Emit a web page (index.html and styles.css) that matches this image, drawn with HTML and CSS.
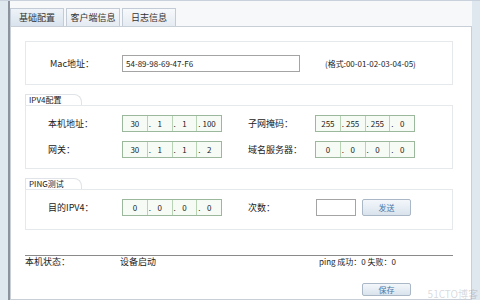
FILE: index.html
```html
<!DOCTYPE html>
<html lang="zh-CN">
<head>
    <meta charset="UTF-8">
    <title>网络配置</title>
    <link rel="stylesheet" href="styles.css">
</head>
<body>
    <div class="frame">
        <!-- 选项卡 -->
        <div class="tabs">
            <div class="tab active">基础配置</div>
            <div class="tab">客户端信息</div>
            <div class="tab">日志信息</div>
        </div>

        <div class="panel">
            <!-- MAC -->
            <div class="group mac">
                <span class="label">Mac地址：</span>
                <div class="text-input wide">54-89-98-69-47-F6</div>
                <span class="hint">(格式:00-01-02-03-04-05)</span>
            </div>

            <!-- IPV4 -->
            <div class="legend">IPV4配置</div>
            <div class="group boxed">
                <div class="row">
                    <span class="label">本机地址：</span>
                    <div class="ip"><span>30</span><span>1</span><span>1</span><span>100</span></div>
                    <span class="label right">子网掩码：</span>
                    <div class="ip"><span>255</span><span>255</span><span>255</span><span>0</span></div>
                </div>
                <div class="row">
                    <span class="label">网关：</span>
                    <div class="ip"><span>30</span><span>1</span><span>1</span><span>2</span></div>
                    <span class="label right">域名服务器：</span>
                    <div class="ip"><span>0</span><span>0</span><span>0</span><span>0</span></div>
                </div>
            </div>

            <!-- PING -->
            <div class="legend">PING测试</div>
            <div class="group boxed ping">
                <div class="row">
                    <span class="label">目的IPV4：</span>
                    <div class="ip"><span>0</span><span>0</span><span>0</span><span>0</span></div>
                    <span class="label right">次数：</span>
                    <div class="text-input small"></div>
                    <button class="btn">发送</button>
                </div>
            </div>

            <!-- 状态 -->
            <div class="status">
                <span class="status-name">本机状态：</span>
                <span class="status-value">设备启动</span>
                <span class="status-ping">ping 成功：0 失败：0</span>
            </div>

            <div class="footer">
                <button class="btn">保存</button>
            </div>
        </div>
    </div>
    <div class="watermark">51CTO博客</div>
</body>
</html>
```

FILE: styles.css
```css
body {
    margin: 0;
    width: 480px;
    height: 300px;
    overflow: hidden;
    background: #dfe7ef;
    border-top: 1px solid #c9d2dc;
    box-sizing: border-box;
    font-family: "Noto Sans CJK SC", "DejaVu Sans", sans-serif;
    font-size: 9px;
    color: #222;
    position: relative;
}
.frame {
    margin-left: 8px;
    width: 464px;
    height: 299px;
    background: #f6f8fa;
    border-left: 2px solid #8c939c;
    box-sizing: border-box;
    padding-top: 7px;
}
.tabs {
    display: flex;
    gap: 2px;
}
.tab {
    width: 52px;
    height: 17px;
    line-height: 17px;
    text-align: center;
    border: 1px solid #c3ccd6;
    border-bottom: none;
    background: linear-gradient(#f7f9fb, #e4ebf2);
    color: #333;
}
.tab.active {
    background: linear-gradient(#eef3f8, #d9e3ed);
}
.panel {
    background: #fff;
    border: 1px solid #c8cfd7;
    height: 274px;
    box-sizing: border-box;
    padding: 14px 0 0 14px;
}
.group {
    width: 428px;
    box-sizing: border-box;
    border: 1px solid #e6e9ec;
}
.mac {
    height: 44px;
    display: flex;
    align-items: center;
    padding-left: 24px;
}
.mac .label {
    width: 72px;
}
.hint {
    margin-left: 25px;
    font-size: 8px;
}
.legend {
    margin-top: 9px;
    width: 52px;
    height: 10px;
    line-height: 10px;
    padding-left: 3px;
    border: 1px solid #e0e3e7;
    border-bottom: none;
    border-top-right-radius: 8px;
    font-size: 8px;
    color: #222;
}
.boxed {
    padding: 9px 0 10px 22px;
    display: flex;
    flex-direction: column;
    gap: 9px;
}
.ping {
    padding-bottom: 13px;
}
.row {
    display: flex;
    align-items: center;
}
.label {
    width: 74px;
    flex: none;
}
.label.right {
    width: 67px;
    margin-left: 26px;
}
.text-input {
    height: 17px;
    box-sizing: border-box;
    border: 1px solid #a4a4a4;
    line-height: 15px;
    padding-left: 3px;
    background: #fff;
    font-size: 8px;
}
.wide {
    width: 178px;
}
.small {
    width: 40px;
    margin-left: 1px;
}
.ip {
    display: flex;
    width: 100px;
    height: 17px;
    box-sizing: border-box;
    border: 1px solid #9cb89c;
    background: #f7fbf5;
}
.ip span {
    flex: 1;
    text-align: center;
    line-height: 15px;
    font-size: 8px;
    border-left: 1px solid #b9d4b5;
    position: relative;
}
.ip span:first-child {
    border-left: none;
}
.ip span + span::before {
    content: ".";
    position: absolute;
    left: 1px;
    top: 0;
}
.btn {
    margin-left: 6px;
    width: 49px;
    height: 17px;
    padding: 0;
    border: 1px solid #a9b7c6;
    border-radius: 2px;
    background: linear-gradient(#f3f7fb, #d9e3ec);
    color: #4a77a8;
    font-family: inherit;
    font-size: 8px;
}
.status {
    margin-top: 25px;
    width: 428px;
    border-top: 1px solid #8a8a8a;
    display: flex;
    line-height: 11px;
}
.status-name {
    width: 95px;
}
.status-value {
    width: 199px;
}
.status-ping {
    font-size: 8px;
}
.footer {
    width: 428px;
    display: flex;
    justify-content: flex-end;
    padding-top: 16px;
    padding-right: 42px;
    box-sizing: border-box;
}
.footer .btn {
    height: 13px;
    line-height: 11px;
}
.watermark {
    position: absolute;
    right: 2px;
    bottom: 0;
    font-size: 10px;
    line-height: 12px;
    color: rgba(120, 130, 140, 0.3);
}
```
